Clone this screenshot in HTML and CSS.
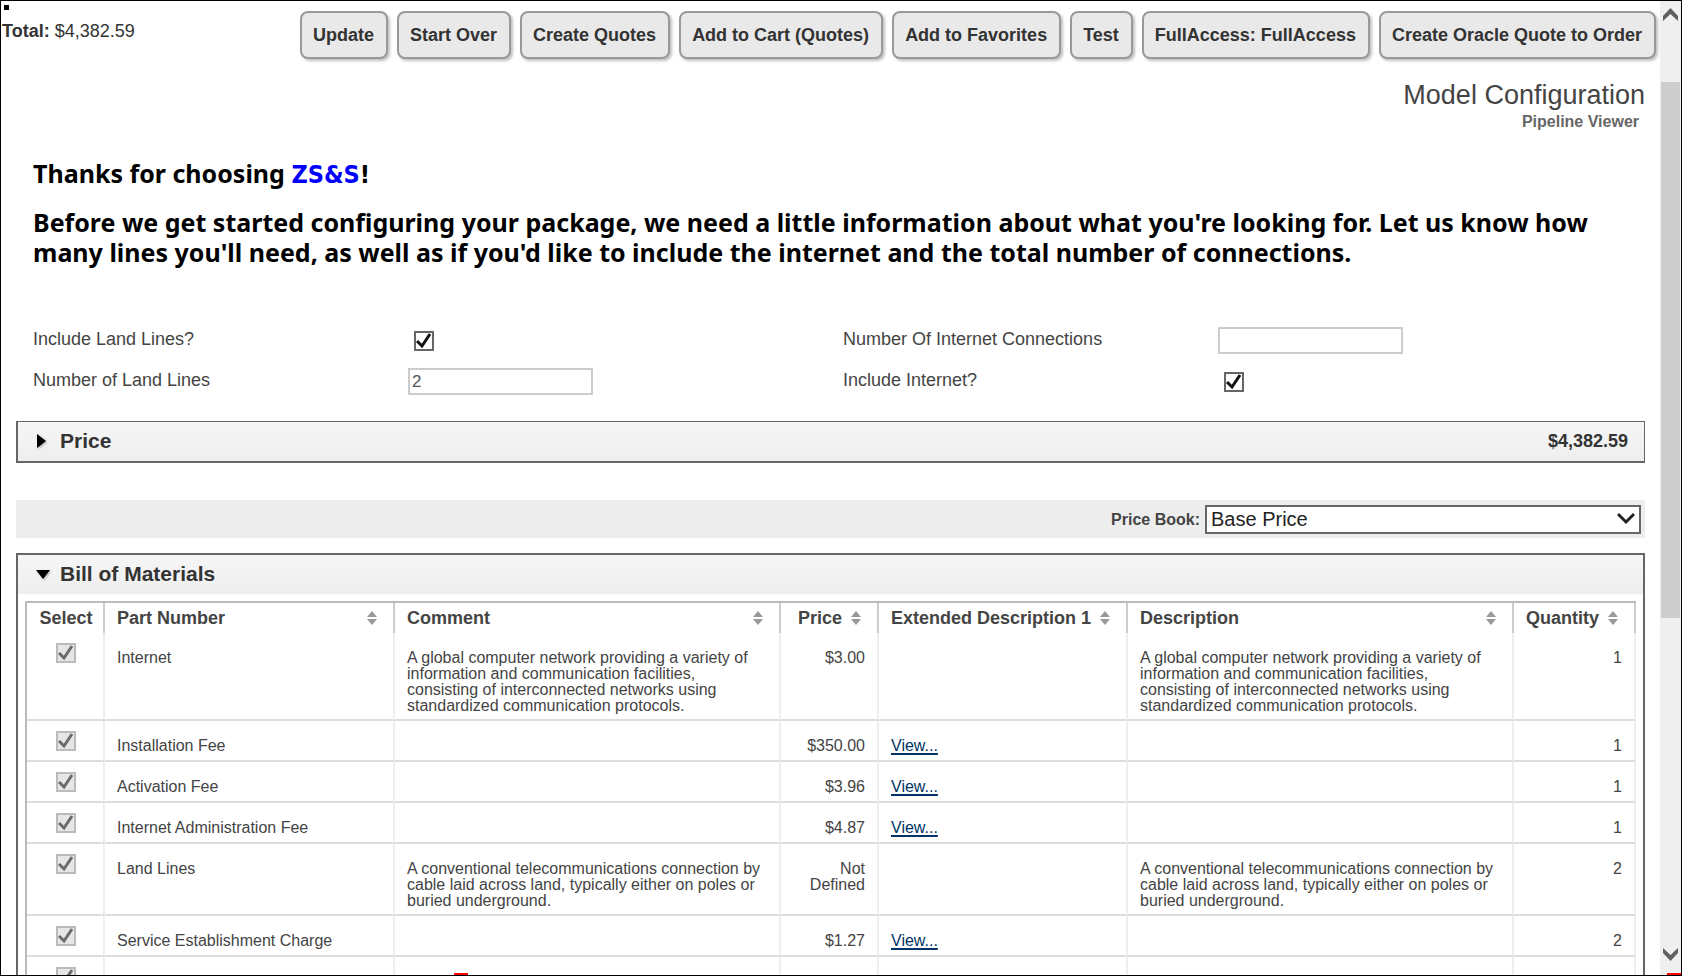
FILE: index.html
```html
<!DOCTYPE html>
<html lang="en">
<head>
    <meta charset="UTF-8">
    <meta name="viewport" content="width=device-width, initial-scale=1.0">
    <title>Model Configuration</title>
    <link rel="stylesheet" href="styles.css">
</head>
<body>

<svg class="defs" aria-hidden="true">
    <symbol id="sort" viewBox="0 0 12 14">
        <path d="M6 0 L11 6 H1 Z M1 8 H11 L6 14 Z" fill="#999"/>
    </symbol>
</svg>

<div class="frame">
    <main class="page">
        <span class="dot"></span>

        <header class="toolbar">
            <p class="total"><strong>Total:</strong> $4,382.59</p>
            <div class="actions">
                <button type="button">Update</button>
                <button type="button">Start Over</button>
                <button type="button">Create Quotes</button>
                <button type="button">Add to Cart (Quotes)</button>
                <button type="button">Add to Favorites</button>
                <button type="button">Test</button>
                <button type="button">FullAccess: FullAccess</button>
                <button type="button">Create Oracle Quote to Order</button>
            </div>
        </header>

        <div class="content">
            <div class="heading">
                <h1>Model Configuration</h1>
                <p class="subtitle">Pipeline Viewer</p>
            </div>

            <div class="intro">
                <p>Thanks for choosing <span class="brand">ZS&amp;S</span><span class="bang">!</span></p>
                <p>Before we get started configuring your package, we need a little information about what you're looking for. Let us know how many lines you'll need, as well as if you'd like to include the internet and the total number of connections.</p>
            </div>

            <form class="options">
                <div class="field">
                    <label for="land">Include Land Lines?</label>
                    <input type="checkbox" id="land" checked>
                </div>
                <div class="field">
                    <label for="connections">Number Of Internet Connections</label>
                    <input type="text" id="connections">
                </div>
                <div class="field">
                    <label for="lines">Number of Land Lines</label>
                    <input type="text" id="lines" value="2">
                </div>
                <div class="field">
                    <label for="internet">Include Internet?</label>
                    <input type="checkbox" id="internet" checked>
                </div>
            </form>

            <section class="panel price-panel">
                <h2 class="panel-head">
                    <button type="button" aria-expanded="false">
                        <svg width="18" height="18" viewBox="0 0 18 18"><path d="M4 2 L13 9 L4 16 Z"/></svg>
                        Price
                    </button>
                    <span class="amount">$4,382.59</span>
                </h2>
            </section>

            <div class="pricebook">
                <label for="book">Price Book:</label>
                <select id="book">
                    <option>Base Price</option>
                </select>
            </div>

            <section class="panel bom-panel">
                <h2 class="panel-head">
                    <button type="button" aria-expanded="true">
                        <svg width="18" height="18" viewBox="0 0 18 18"><path d="M3 5 H17 L10 14 Z"/></svg>
                        Bill of Materials
                    </button>
                </h2>
                <div class="panel-body">
                    <table class="bom">
                        <colgroup>
                            <col class="c-select">
                            <col class="c-part">
                            <col>
                            <col class="c-price">
                            <col class="c-ext">
                            <col>
                            <col class="c-qty">
                        </colgroup>
                        <thead>
                            <tr>
                                <th class="select">Select</th>
                                <th><button type="button">Part Number <svg width="12" height="14"><use href="#sort"/></svg></button></th>
                                <th><button type="button">Comment <svg width="12" height="14"><use href="#sort"/></svg></button></th>
                                <th class="num"><button type="button">Price <svg width="12" height="14"><use href="#sort"/></svg></button></th>
                                <th><button type="button">Extended Description 1 <svg width="12" height="14"><use href="#sort"/></svg></button></th>
                                <th><button type="button">Description <svg width="12" height="14"><use href="#sort"/></svg></button></th>
                                <th class="num"><button type="button">Quantity <svg width="12" height="14"><use href="#sort"/></svg></button></th>
                            </tr>
                        </thead>
                        <tbody>
                            <tr>
                                <td class="select"><input type="checkbox" aria-label="Internet" checked disabled></td>
                                <td>Internet</td>
                                <td>A global computer network providing a variety of information and communication facilities, consisting of interconnected networks using standardized communication protocols.</td>
                                <td class="num">$3.00</td>
                                <td></td>
                                <td>A global computer network providing a variety of information and communication facilities, consisting of interconnected networks using standardized communication protocols.</td>
                                <td class="num">1</td>
                            </tr>
                            <tr>
                                <td class="select"><input type="checkbox" aria-label="Installation Fee" checked disabled></td>
                                <td>Installation Fee</td>
                                <td></td>
                                <td class="num">$350.00</td>
                                <td><a href="#">View...</a></td>
                                <td></td>
                                <td class="num">1</td>
                            </tr>
                            <tr>
                                <td class="select"><input type="checkbox" aria-label="Activation Fee" checked disabled></td>
                                <td>Activation Fee</td>
                                <td></td>
                                <td class="num">$3.96</td>
                                <td><a href="#">View...</a></td>
                                <td></td>
                                <td class="num">1</td>
                            </tr>
                            <tr>
                                <td class="select"><input type="checkbox" aria-label="Internet Administration Fee" checked disabled></td>
                                <td>Internet Administration Fee</td>
                                <td></td>
                                <td class="num">$4.87</td>
                                <td><a href="#">View...</a></td>
                                <td></td>
                                <td class="num">1</td>
                            </tr>
                            <tr>
                                <td class="select"><input type="checkbox" aria-label="Land Lines" checked disabled></td>
                                <td>Land Lines</td>
                                <td>A conventional telecommunications connection by cable laid across land, typically either on poles or buried underground.</td>
                                <td class="num">Not Defined</td>
                                <td></td>
                                <td>A conventional telecommunications connection by cable laid across land, typically either on poles or buried underground.</td>
                                <td class="num">2</td>
                            </tr>
                            <tr>
                                <td class="select"><input type="checkbox" aria-label="Service Establishment Charge" checked disabled></td>
                                <td>Service Establishment Charge</td>
                                <td></td>
                                <td class="num">$1.27</td>
                                <td><a href="#">View...</a></td>
                                <td></td>
                                <td class="num">2</td>
                            </tr>
                            <tr>
                                <td class="select"><input type="checkbox" aria-label="Select" checked disabled></td>
                                <td></td>
                                <td></td>
                                <td></td>
                                <td></td>
                                <td></td>
                                <td></td>
                            </tr>
                        </tbody>
                    </table>
                </div>
            </section>
        </div>
    </main>

    <div class="scrollbar" aria-hidden="true">
        <svg width="17" height="14" viewBox="0 0 17 14"><path d="M1 8 L8.500 0 L16 8 V13 L8.500 6 L1 13 Z"/></svg>
        <div class="track"><div class="thumb"></div></div>
        <svg width="17" height="14" viewBox="0 0 17 14"><path d="M1 1 L8.500 8 L16 1 V6 L8.500 14 L1 6 Z"/></svg>
    </div>
    <span class="mark mark-left"></span>
    <span class="mark mark-right"></span>
</div>

</body>
</html>
```
FILE: styles.css
```css
* { box-sizing: border-box; }
body { margin: 0; font-family: "Liberation Sans", Arial, sans-serif; color: #444; background: #fff; }
h1, h2, p { margin: 0; }
button { font-family: inherit; color: inherit; cursor: pointer; }
.defs { display: none; }

.frame { position: relative; display: flex; height: 100vh; border: 1px solid #000; overflow: hidden; }
.page { flex: 1; min-width: 0; overflow: hidden; }
.dot { position: absolute; left: 3px; top: 4px; width: 5px; height: 5px; background: #000; }

/* top bar */
.toolbar { display: flex; justify-content: space-between; align-items: flex-start; padding: 10px 4px 0 1px; }
.total { font-size: 18px; line-height: 20px; padding-top: 10px; color: #333; }
.actions { display: flex; gap: 9px; }
.actions button {
    height: 48px;
    padding: 0 12px 0 11px;
    border: 2px solid #999;
    border-radius: 8px;
    background: #e9e9e9;
    color: #333;
    font-size: 18px;
    font-weight: bold;
    white-space: nowrap;
    box-shadow: 2px 2px 3px rgba(0, 0, 0, 0.25);
}

.content { padding: 0 15px; }
.heading { text-align: right; margin-top: 21px; }
h1 { font-size: 27px; line-height: 30px; font-weight: normal; }
.subtitle { font-size: 16px; line-height: 24px; font-weight: bold; color: #666; padding-right: 6px; }

.intro { margin-top: 24px; padding: 0 17px; font-family: "Noto Sans", Tahoma, sans-serif; font-size: 25px; line-height: 30px; font-weight: bold; color: #000; }
.intro p + p { margin-top: 17px; }
.brand, .bang { font-family: "DejaVu Sans Condensed", Tahoma, sans-serif; }
.brand { color: #00f; }

/* options form */
.options { display: grid; grid-template-columns: 1fr 1fr; gap: 13px 8px; margin-top: 60px; padding-left: 17px; }
.field { display: grid; grid-template-columns: 375px 1fr; align-items: start; height: 28px; font-size: 18px; line-height: 24px; }
input[type="text"] { width: 185px; height: 27px; border: 2px solid #ccc; padding: 0 2px; font-family: inherit; font-size: 17px; color: #555; background: #fff; }
input[type="checkbox"] {
    appearance: none;
    display: block;
    width: 20px;
    height: 20px;
    margin: 0;
    border: 2px solid #666;
    background: #fff url("data:image/svg+xml,%3Csvg xmlns='http://www.w3.org/2000/svg' viewBox='0 0 16 16'%3E%3Cpath d='M1 8 L6 13 L14 1' fill='none' stroke='%23111' stroke-width='3'/%3E%3C/svg%3E");
}
.field input[type="checkbox"] { margin: 4px 0 0 6px; }
input[type="checkbox"]:disabled {
    border-color: #bbb;
    background: #e6e6e6 url("data:image/svg+xml,%3Csvg xmlns='http://www.w3.org/2000/svg' viewBox='0 0 16 16'%3E%3Cpath d='M1 8 L6 13 L14 1' fill='none' stroke='%236b6b6b' stroke-width='3'/%3E%3C/svg%3E");
}

/* panels */
.panel { border: 2px solid #666; }
.panel-head { display: flex; justify-content: space-between; align-items: center; height: 39px; padding: 0 16px 0 15px; background: linear-gradient(#f6f6f6, #eee); color: #333; }
.panel-head button { display: flex; align-items: center; gap: 9px; padding: 0 0 2px; border: 0; background: none; font-size: 21px; font-weight: bold; }
.panel-head svg { filter: drop-shadow(1px 1px 1px rgba(0, 0, 0, 0.3)); }
.amount { font-size: 18px; }
.price-panel { margin-top: 25px; border-width: 1px 1px 2px 2px; }

.pricebook { display: flex; justify-content: flex-end; align-items: center; gap: 5px; height: 38px; margin: 37px 0 15px; padding-right: 4px; background: #ededed; font-size: 16px; }
.pricebook label { padding-top: 2px; font-weight: bold; }
.pricebook select {
    appearance: none;
    width: 436px;
    height: 29px;
    padding: 0 4px;
    border: 2px solid #666;
    border-radius: 0;
    font-family: inherit;
    font-size: 20px;
    line-height: 22px;
    color: #222;
    background: #fff url("data:image/svg+xml,%3Csvg xmlns='http://www.w3.org/2000/svg' width='18' height='14' viewBox='0 0 18 14'%3E%3Cpath d='M1 2 L9 10 L17 2' fill='none' stroke='%23222' stroke-width='3'/%3E%3C/svg%3E") no-repeat right 4px center;
}

.bom-panel { border-bottom: 0; }
.panel-body { padding: 7px; }

/* bill of materials */
.bom { width: 100%; table-layout: fixed; border-collapse: separate; border-spacing: 0; border-top: 2px solid #bbb; border-left: 2px solid #bbb; font-size: 16px; line-height: 16px; }
.c-select { width: 78px; }
.c-part { width: 290px; }
.c-price { width: 98px; }
.c-ext { width: 249px; }
.c-qty { width: 122px; }
th { height: 30px; padding: 0 12px; border-right: 2px solid #ccc; font-size: 18px; text-align: left; white-space: nowrap; }
th button { display: flex; justify-content: space-between; align-items: center; gap: 8px; width: 100%; padding: 0 3px 0 0; border: 0; background: none; font-size: 18px; font-weight: bold; }
th.num button { justify-content: flex-end; }
td { height: 41px; padding: 17px 12px 5px; border-right: 2px solid #eee; border-bottom: 2px solid #ddd; vertical-align: top; }
.select { padding: 0 0 0 2px; text-align: center; }
td.select { padding-top: 10px; }
td.select input { margin: 0 auto; }
.num { text-align: right; }
.bom a { color: #036; text-decoration: underline; text-decoration-thickness: 2px; text-underline-offset: 2px; }

/* scrollbar column */
.scrollbar { display: flex; flex-direction: column; align-items: center; width: 21px; padding: 7px 0 14px; background: #efefef; }
.scrollbar svg { fill: #606060; }
.track { flex: 1; width: 19px; padding-top: 60px; }
.thumb { height: 62%; min-height: 20px; background: #cdcdcd; }

.mark { position: absolute; bottom: 0; height: 2px; width: 14px; background: #f00; }
.mark-left { left: 453px; }
.mark-right { right: 0; }
```
